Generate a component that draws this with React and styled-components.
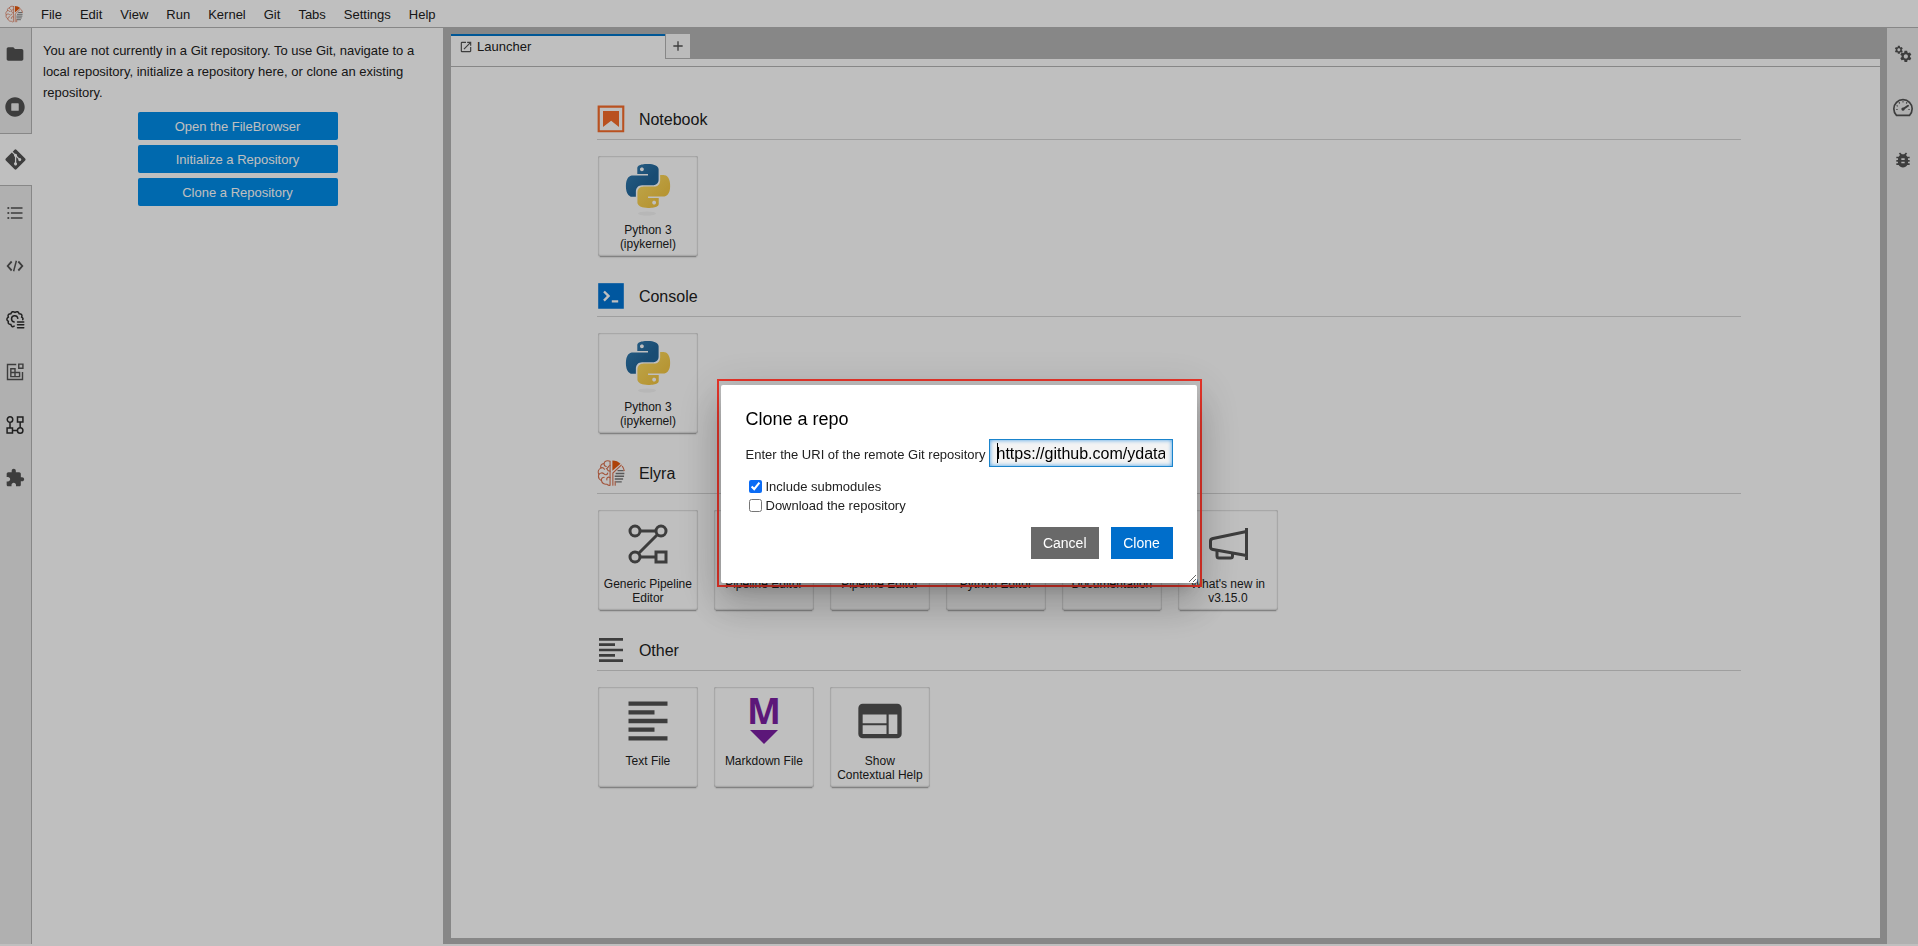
import React, { useEffect, useRef } from "react";
import styled, { createGlobalStyle } from "styled-components";
import { FaGitAlt } from "react-icons/fa";

const GlobalStyle = createGlobalStyle`
  * { box-sizing: border-box; }
  body { margin: 0; background: #fff; }
  body, button, input { font-family: "Liberation Sans", Arial, sans-serif; }
`;

const ink = "#212121";
const iconInk = "#525252";
const line = "#b5b5b5";

const Page = styled.div`
  display: flex;
  flex-direction: column;
  min-height: 100vh;
  padding-bottom: 2px;
  font-size: 13px;
  color: ${ink};
`;

const MenuBar = styled.nav`
  display: flex;
  align-items: center;
  height: 28px;
  padding-left: 5px;
  border-bottom: 1px solid ${line};
`;

const MenuItems = styled.div`
  display: flex;
  padding: 2px 0 0 9px;
`;

const MenuItem = styled.button`
  padding: 0 9px;
  border: 0;
  background: none;
  font-size: 13px;
  line-height: 20px;
  color: ${ink};
`;

const Body = styled.div`
  display: flex;
  flex: 1;
`;

const SideBar = styled.aside`
  display: flex;
  flex-direction: column;
  flex: none;
  width: ${(p) => (p.$right ? "31px" : "32px")};
  background: #ebebeb;
`;

const SideTab = styled.button`
  display: flex;
  align-items: center;
  justify-content: center;
  height: 53px;
  padding: 0;
  border: 0 solid ${line};
  border-right-width: ${(p) => (p.$plain || p.$current ? 0 : "1px")};
  border-top-width: ${(p) => (p.$current ? "1px" : 0)};
  border-bottom-width: ${(p) => (p.$current ? "1px" : 0)};
  padding-right: ${(p) => (p.$plain ? 0 : p.$current ? "2px" : "1px")};
  background: ${(p) => (p.$current ? "#fff" : "transparent")};
  color: ${iconInk};

  &:first-child {
    height: 52px;
  }
`;

const SideFill = styled.div`
  flex: 1;
  border-right: 1px solid ${line};
`;

const GitPanel = styled.section`
  flex: none;
  width: 411px;
  padding: 12px 11px;
  background: #fff;
`;

const GitText = styled.p`
  margin: 0 0 9px;
  line-height: 21px;
`;

const GitActions = styled.div`
  display: flex;
  flex-direction: column;
  align-items: center;
  gap: 5px;
`;

const GitButton = styled.button`
  width: 200px;
  height: 28px;
  border: 0;
  border-radius: 2px;
  background: #008ce8;
  color: #fff;
  font-size: 13px;
`;

const Dock = styled.main`
  display: flex;
  flex-direction: column;
  flex: 1;
  padding: 6px 7px 6px 8px;
  background: #b5b5b5;
`;

const TabRow = styled.div`
  display: flex;
  align-items: flex-start;
  height: 25px;
`;

const Tab = styled.div`
  display: flex;
  align-items: center;
  gap: 4px;
  width: 214px;
  height: 25px;
  padding: 0 8px 2px;
  border-top: 2px solid #0074c8;
  background: #fff;
`;

const AddTab = styled.button`
  display: flex;
  align-items: center;
  justify-content: center;
  width: 25px;
  height: 25px;
  padding: 0;
  border: solid ${line};
  border-width: 0 0 1px 1px;
  background: #fafafa;
  color: ${iconInk};
`;

const Toolbar = styled.div`
  height: 8px;
  border-bottom: 1px solid ${line};
  background: #fff;
`;

const Launcher = styled.div`
  display: flex;
  flex-direction: column;
  flex: 1;
  gap: 26px;
  padding: 38px calc(10% - 4px) 38px calc(10% + 3px);
  background: #fff;
`;

const SectionHead = styled.div`
  display: flex;
  align-items: flex-start;
  gap: 14px;
  height: 35px;
  border-bottom: 1px solid #d5d5d5;
`;

const SectionTitle = styled.h2`
  margin: 0;
  font-size: 16px;
  font-weight: 400;
  line-height: 29px;
`;

const Cards = styled.div`
  display: flex;
  gap: 16px;
  padding: 16px 1px 0;
`;

const Card = styled.button`
  display: flex;
  flex-direction: column;
  align-items: center;
  width: 100px;
  height: 100px;
  padding: 8px 2px 0;
  border: 0;
  border-radius: 2px;
  background: #fff;
  box-shadow: 0 3px 1px -2px rgba(0, 0, 0, 0.2), 0 2px 2px -1px rgba(0, 0, 0, 0.2),
    inset 0 0 2px 0 rgba(0, 0, 0, 0.45);
  color: ${ink};
`;

const CardLabel = styled.span`
  margin-top: 7px;
  font-size: 12px;
  line-height: 14px;
  text-align: center;
  white-space: pre-line;
`;

const Overlay = styled.div`
  position: fixed;
  inset: 0;
  display: flex;
  align-items: center;
  justify-content: center;
  padding-top: 20px;
  background: rgba(0, 0, 0, 0.25);
`;

const Highlight = styled.div`
  border: 2px solid #e8352a;
  padding: 4px 3px 2px 2px;
`;

const Dialog = styled.form`
  display: flex;
  flex-direction: column;
  width: 476px;
  padding: 21px 24px 24px 25px;
  border-radius: 2px;
  background: #fff;
  box-shadow: 0 11px 15px -7px rgba(0, 0, 0, 0.2), 0 24px 38px 3px rgba(0, 0, 0, 0.14),
    0 9px 46px 8px rgba(0, 0, 0, 0.12);
  overflow: hidden;
  resize: both;
  font-size: 13px;
  color: ${ink};
`;

const DialogTitle = styled.h1`
  margin: 0 0 7px;
  font-size: 18px;
  font-weight: 400;
  line-height: 26px;
  color: #000;
`;

const UriRow = styled.div`
  display: flex;
  align-items: center;
  justify-content: space-between;
  margin-bottom: 10px;
  white-space: nowrap;
`;

const UriLabel = styled.label`
  padding-top: 3px;
  line-height: 20px;
`;

const UriField = styled.div`
  position: relative;

  &::after {
    content: "";
    position: absolute;
    top: 4px;
    left: 8px;
    width: 1px;
    height: 20px;
    background: #000;
  }
`;

const UriInput = styled.input`
  display: block;
  width: 184px;
  height: 28px;
  padding: 1px 7px 0;
  border: 1px solid #1a84cc;
  border-radius: 0;
  outline: 0;
  background: #f3f3f3;
  box-shadow: inset 0 0 4px #3c9be6;
  caret-color: transparent;
  font-size: 16px;
  color: #000;
`;

const CheckRow = styled.label`
  display: flex;
  align-items: center;
  gap: 4px;
  height: 19px;
  padding-left: 3px;
`;

const Check = styled.input`
  width: 13px;
  height: 13px;
  margin: 0;
  accent-color: #0b6cf5;
`;

const DialogActions = styled.div`
  display: flex;
  justify-content: flex-end;
  gap: 12px;
  margin-top: 12px;
`;

const DialogButton = styled.button`
  min-width: 62px;
  height: 32px;
  padding: 0 12px;
  border: 0;
  background: ${(p) => (p.$primary ? "#006ecb" : "#696969")};
  color: #fff;
  font-size: 14px;
`;

const Svg = ({ size = 20, box = "0 0 24 24", children }) => (
  <svg width={size} height={size} viewBox={box} fill="currentColor" aria-hidden="true">
    {children}
  </svg>
);

const gearPath =
  "M19.14 12.94c.04-.3.06-.61.06-.94 0-.32-.02-.64-.07-.94l2.03-1.58c.18-.14.23-.41.12-.61l-1.92-3.32c-.12-.22-.37-.29-.59-.22l-2.39.96c-.5-.38-1.03-.7-1.62-.94l-.36-2.54c-.04-.24-.24-.41-.48-.41h-3.84c-.24 0-.43.17-.47.41l-.36 2.54c-.59.24-1.13.57-1.62.94l-2.39-.96c-.22-.08-.47 0-.59.22L2.74 8.87c-.12.21-.08.47.12.61l2.03 1.58c-.05.3-.09.63-.09.94s.02.64.07.94l-2.03 1.58c-.18.14-.23.41-.12.61l1.92 3.32c.12.22.37.29.59.22l2.39-.96c.5.38 1.03.7 1.62.94l.36 2.54c.05.24.24.41.48.41h3.84c.24 0 .44-.17.47-.41l.36-2.54c.59-.24 1.13-.56 1.62-.94l2.39.96c.22.08.47 0 .59-.22l1.92-3.32c.12-.22.07-.47-.12-.61l-2.01-1.58zM12 15.6c-1.98 0-3.6-1.62-3.6-3.6s1.62-3.6 3.6-3.6 3.6 1.62 3.6 3.6-1.62 3.6-3.6 3.6z";

const textLines = "M15 15H3v2h12v-2zm0-8H3v2h12V7zM3 13h18v-2H3v2zm0 8h18v-2H3v2zM3 3v2h18V3H3z";

const ElyraLogo = ({ size }) => (
  <Svg size={size} box="0 0 30 30">
    <g fill="none" stroke="#d9714f" strokeWidth="1.2" strokeLinecap="round">
      <path d="M14 2.500c-3-1.500-6 0-6.500 2.300C4.500 5 3.500 7.500 4.200 9.500 1.500 11 .700 14 2 16.500c-1 3 .500 5.500 2.700 6.500.500 3 3.300 4.500 5.800 4 1.200 1.300 2.500 1.500 3.500 1V2.500z" />
      <path d="M7.500 4.800c0 2 1 3 2.500 3.200M4.200 9.500c1.500-.5 3 0 3.800 1.500M14 7c-2 0-2 3-4 3.500M2 16.500c1.500-2 4-2 5.500-.5s3.500 1 4-1M4.700 23c-.2-2 1-3.500 3-3.500M14 13c-1 0-2.500 0-3-2M14 20c-2-1.500-4 0-3.500 2.500" />
      <path d="M17 28V15l9-8.500M19.500 28v-4" />
    </g>
    <path d="M16.500 1.500c3.500 0 6.500 1.200 8.700 3.700L16.500 12.500z" fill="#e8590c" />
    <path
      d="M22 12.500h6.500M20 15.500h9.300M19 18.500h10M19 21.500h9M20 24.500h6.500"
      fill="none"
      stroke="#777"
      strokeWidth="1.500"
    />
    <path d="M27 7.500c1.200 1.700 2 3.500 2.200 5.500" fill="none" stroke="#d9714f" strokeWidth="1.300" />
  </Svg>
);

const PythonIcon = () => (
  <Svg size={52} box="0 0 52 52">
    <defs>
      <linearGradient id="pyBlue" x1="0" y1="0" x2="1" y2="1">
        <stop offset="0" stopColor="#3680b4" />
        <stop offset="0.600" stopColor="#22669a" />
      </linearGradient>
      <linearGradient id="pyYellow" x1="0" y1="0" x2="1" y2="1">
        <stop offset="0" stopColor="#ffdf66" />
        <stop offset="1" stopColor="#efbe38" />
      </linearGradient>
    </defs>
    <ellipse cx="25" cy="49.500" rx="9" ry="2" fill="#f4f4f4" />
    <g transform="translate(4 0) scale(1.830)">
      <path
        fill="url(#pyBlue)"
        d="M14.25.18l.9.2.73.26.59.3.45.32.34.34.25.34.16.33.1.3.04.26.02.2-.01.13V8.5l-.05.63-.13.55-.21.46-.26.38-.3.31-.33.25-.35.19-.35.14-.33.1-.3.07-.26.04-.21.02H8.77l-.69.05-.59.14-.5.22-.41.27-.33.32-.27.35-.2.36-.15.37-.1.35-.07.32-.04.27-.02.21v3.06H3.17l-.21-.03-.28-.07-.32-.12-.35-.18-.36-.26-.36-.36-.35-.46-.32-.59-.28-.73-.21-.88-.14-1.05-.05-1.23.06-1.22.16-1.04.24-.87.32-.71.36-.57.4-.44.42-.33.42-.24.4-.16.36-.1.32-.05.24-.01h.16l.06.01h8.16v-.83H6.18l-.01-2.75-.02-.37.05-.34.11-.31.17-.28.25-.26.31-.23.38-.2.44-.18.51-.15.58-.12.64-.1.71-.06.77-.04.84-.02 1.27.05zm-6.3 1.98l-.23.33-.08.41.08.41.23.34.33.22.41.09.41-.09.33-.22.23-.34.08-.41-.08-.41-.23-.33-.33-.22-.41-.09-.41.09z"
      />
      <path
        fill="url(#pyYellow)"
        d="M21.1 6.11l.28.06.32.12.35.18.36.27.36.35.35.47.32.59.28.73.21.88.14 1.04.05 1.23-.06 1.23-.16 1.04-.24.86-.32.71-.36.57-.4.45-.42.33-.42.24-.4.16-.36.09-.32.05-.24.02-.16-.01h-8.22v.82h5.84l.01 2.76.02.36-.05.34-.11.31-.17.29-.25.25-.31.24-.38.2-.44.17-.51.15-.58.13-.64.09-.71.07-.77.04-.84.01-1.27-.04-1.07-.14-.9-.2-.73-.25-.59-.3-.45-.33-.34-.34-.25-.34-.16-.33-.1-.3-.04-.25-.02-.2.01-.13v-5.34l.05-.64.13-.54.21-.46.26-.38.3-.32.33-.24.35-.2.35-.14.33-.1.3-.06.26-.04.21-.02.13-.01h5.84l.69-.05.59-.14.5-.21.41-.28.33-.32.27-.35.2-.36.15-.36.1-.35.07-.32.04-.28.02-.21V6.07h2.09l.14.01zm-6.47 14.25l-.23.33-.08.41.08.41.23.33.33.23.41.08.41-.08.33-.23.23-.33.08-.41-.08-.41-.23-.33-.33-.23-.41-.08-.41.08z"
      />
    </g>
  </Svg>
);

const PipelineIcon = () => (
  <Svg size={52} box="0 0 52 52">
    <g fill="none" stroke={iconInk} strokeWidth="3">
      <circle cx="13" cy="13" r="5" />
      <circle cx="39" cy="13" r="5" />
      <circle cx="13" cy="39" r="5" />
      <path d="M34 34h10v10H34zM18 13h16M18 39h16M35.500 16.500l-19 19" />
    </g>
  </Svg>
);

const MegaphoneIcon = () => (
  <Svg size={52} box="0 0 52 52">
    <g fill="none" stroke={iconInk} strokeWidth="3">
      <path d="M44.500 10v32M44.500 13.500L11 20.500q-2.500.500-2.500 2.500v6q0 2 2.500 2.500l33.500 6" />
      <path d="M15 32.500v5.500q0 2 2 2h11.500q2 0 2-2v-2.500" />
    </g>
  </Svg>
);

const TextIcon = () => (
  <Svg size={52}>
    <path fill={iconInk} d={textLines} />
  </Svg>
);

const MarkdownLetter = styled.text`
  font-family: "Open Sans", sans-serif;
  font-size: 36px;
  font-weight: 700;
  text-anchor: middle;
  fill: #7b1fa2;
`;

const MarkdownIcon = () => (
  <Svg size={52} box="0 0 52 52">
    <MarkdownLetter x="26" y="29">
      M
    </MarkdownLetter>
    <path d="M12 35h28L26 49z" fill="#7b1fa2" />
  </Svg>
);

const HelpIcon = () => (
  <Svg size={52}>
    <path
      fill={iconInk}
      d="M20 4H4c-1.1 0-1.99.9-1.99 2L2 18c0 1.1.9 2 2 2h16c1.1 0 2-.9 2-2V6c0-1.1-.9-2-2-2zm-5 14H4v-4h11v4zm0-5H4V9h11v4zm5 5h-4V9h4v9z"
    />
  </Svg>
);

const leftTabs = [
  {
    name: "File Browser",
    icon: (
      <Svg>
        <path d="M10 4H4c-1.1 0-1.99.9-1.99 2L2 18c0 1.1.9 2 2 2h16c1.1 0 2-.9 2-2V8c0-1.1-.9-2-2-2h-8l-2-2z" />
      </Svg>
    ),
  },
  {
    name: "Running Terminals and Kernels",
    icon: (
      <Svg box="0 0 512 512">
        <path d="M256 8C119 8 8 119 8 256s111 248 248 248 248-111 248-248S393 8 256 8zm96 328c0 8.800-7.200 16-16 16H176c-8.800 0-16-7.200-16-16V176c0-8.800 7.200-16 16-16h160c8.800 0 16 7.200 16 16v160z" />
      </Svg>
    ),
  },
  { name: "Git", current: true, icon: <FaGitAlt size={23} /> },
  {
    name: "Table of Contents",
    icon: (
      <Svg>
        <path d="M7 5h14v2H7zM7 11h14v2H7zM7 17h14v2H7z" />
        <circle cx="4" cy="6" r="1.300" />
        <circle cx="4" cy="12" r="1.300" />
        <circle cx="4" cy="18" r="1.300" />
      </Svg>
    ),
  },
  {
    name: "Code Snippets",
    icon: (
      <Svg>
        <path d="M8.800 16.600L4.600 12l4.200-4.600L7.200 5.800 1.800 12l5.400 6.200zM15.200 16.600l4.200-4.600-4.200-4.600 1.600-1.600 5.400 6.200-5.400 6.200zM12.800 5.500l1.700.4-3.300 12.600-1.700-.4z" />
      </Svg>
    ),
  },
  {
    name: "Runtimes",
    icon: (
      <Svg>
        <g fill="none" stroke="#2b2b2b" strokeWidth="1.800" strokeLinecap="round">
          <path d="M11 20.500q-3 2-4-2q-4 0-3-3.700q-3.500-2.800 0-5q-1.500-4 3-4q1.500-4 5-1.800q3.500-2.200 5 1.800q4.500 0 3 4q2.300 1.200 1.300 3" />
          <path d="M11 15.500a3.800 3.800 0 1 1 4.400-4.300" />
          <path d="M15 15.500h7.500M15 19h7.500M15 22.500h7.500" />
        </g>
      </Svg>
    ),
  },
  {
    name: "Component Catalogs",
    icon: (
      <Svg>
        <g fill="none" stroke={iconInk} strokeWidth="1.700">
          <path d="M13.500 3H3v18h18V12M16.500 2.500h5v5h-5zM7 8h5v9.500H7zM7 12.500h10.500v5H7zM12 17.500v-5M12 8v4.500" />
        </g>
      </Svg>
    ),
  },
  {
    name: "Pipeline Components",
    icon: (
      <Svg>
        <g fill="none" stroke="#2b2b2b" strokeWidth="1.800">
          <circle cx="6" cy="5.500" r="3.300" />
          <path d="M15 2.500h6.500v6H15zM2.500 15.500H9v6H2.500zM6 9v6.500M18.200 8.500V15M9 18.500h6" />
          <circle cx="18.200" cy="18.500" r="3.300" />
        </g>
      </Svg>
    ),
  },
  {
    name: "Extension Manager",
    icon: (
      <Svg>
        <path d="M20.500 11H19V7c0-1.100-.9-2-2-2h-4V3.500C13 2.120 11.880 1 10.500 1S8 2.120 8 3.500V5H4c-1.100 0-1.990.9-1.990 2v3.800H3.500c1.490 0 2.700 1.210 2.700 2.700s-1.210 2.700-2.700 2.700H2V20c0 1.100.9 2 2 2h3.800v-1.500c0-1.490 1.210-2.700 2.700-2.700 1.490 0 2.700 1.210 2.700 2.700V22H17c1.100 0 2-.9 2-2v-4h1.500c1.380 0 2.500-1.120 2.500-2.500S21.880 11 20.500 11z" />
      </Svg>
    ),
  },
];

const rightTabs = [
  {
    name: "Property Inspector",
    icon: (
      <Svg>
        <path transform="translate(1 1) scale(.5)" d={gearPath} />
        <path transform="translate(7 6.500) scale(.7)" d={gearPath} />
      </Svg>
    ),
  },
  {
    name: "Resource Usage",
    icon: (
      <Svg>
        <g fill="none" stroke={iconInk} strokeWidth="2" strokeLinecap="round">
          <path d="M4.200 22a11 11 0 1 1 15.600 0z" strokeLinejoin="round" />
          <path d="M12 14.500l6-4" strokeWidth="2.400" />
          <path
            d="M12 5.500v.5M7.500 6.800l.3.500M16.500 6.800l-.3.500M4.800 10.500l.5.200M4.500 15h.5M19.500 15h-.5"
            strokeWidth="1.400"
          />
        </g>
        <circle cx="12" cy="14.500" r="2" />
      </Svg>
    ),
  },
  {
    name: "Debugger",
    icon: (
      <Svg>
        <path d="M20 8h-2.810c-.45-.78-1.070-1.450-1.820-1.960L17 4.410 15.590 3l-2.170 2.170C12.960 5.060 12.490 5 12 5c-.49 0-.96.06-1.410.17L8.410 3 7 4.410l1.620 1.630C7.880 6.550 7.260 7.220 6.810 8H4v2h2.090c-.05.33-.09.66-.09 1v1H4v2h2v1c0 .34.04.67.09 1H4v2h2.810c1.040 1.790 2.970 3 5.190 3s4.150-1.210 5.190-3H20v-2h-2.090c.05-.33.09-.66.09-1v-1h2v-2h-2v-1c0-.34-.04-.67-.09-1H20V8zm-6 8h-4v-2h4v2zm0-4h-4v-2h4v2z" />
      </Svg>
    ),
  },
];

const sections = [
  {
    title: "Notebook",
    icon: (
      <Svg size={28} box="1.375 1.375 19.250 19.250">
        <g fill="#f76d2b">
          <path d="M18.700 3.300v15.400H3.300V3.300h15.400m1.500-1.500H1.800v18.300h18.300l.1-18.300z" />
          <path d="M16.500 16.500l-5.400-4.300-5.600 4.300v-11h11z" />
        </g>
      </Svg>
    ),
    cards: [{ label: "Python 3\n(ipykernel)", Icon: PythonIcon }],
  },
  {
    title: "Console",
    icon: (
      <Svg size={28} box="12.500 12.500 175 175">
        <path fill="#0074d5" d="M20 19.800h160v159.900H20z" />
        <path
          fill="#fff"
          d="M105 127.300h40v12.800h-40v-12.800zM51.100 77L74 99.900l-23.300 23.300 10.500 10.500 23.300-23.300L95 99.900 84.500 89.400 61.600 66.500 51.100 77z"
        />
      </Svg>
    ),
    cards: [{ label: "Python 3\n(ipykernel)", Icon: PythonIcon }],
  },
  {
    title: "Elyra",
    icon: <ElyraLogo size={28} />,
    cards: [
      { label: "Generic Pipeline\nEditor", Icon: PipelineIcon },
      { label: "Pipeline Editor", Icon: PipelineIcon },
      { label: "Pipeline Editor", Icon: PipelineIcon },
      { label: "Python Editor", Icon: PythonIcon },
      { label: "Documentation", Icon: TextIcon },
      { label: "What's new in\nv3.15.0", Icon: MegaphoneIcon },
    ],
  },
  {
    title: "Other",
    icon: (
      <Svg size={28} box="1.500 1.500 21 21">
        <path fill={iconInk} d={textLines} />
      </Svg>
    ),
    cards: [
      { label: "Text File", Icon: TextIcon },
      { label: "Markdown File", Icon: MarkdownIcon },
      { label: "Show\nContextual Help", Icon: HelpIcon },
    ],
  },
];

const menus = ["File", "Edit", "View", "Run", "Kernel", "Git", "Tabs", "Settings", "Help"];

function CloneDialog() {
  const uri = useRef(null);
  useEffect(() => {
    uri.current.setSelectionRange(0, 0);
    uri.current.focus({ preventScroll: true });
    uri.current.scrollLeft = 0;
  }, []);
  return (
    <Overlay>
      <Highlight>
        <Dialog role="dialog" aria-labelledby="clone-title" onSubmit={(e) => e.preventDefault()}>
          <DialogTitle id="clone-title">Clone a repo</DialogTitle>
          <UriRow>
            <UriLabel htmlFor="uri">Enter the URI of the remote Git repository</UriLabel>
            <UriField>
              <UriInput id="uri" ref={uri} defaultValue="https://github.com/ydata" />
            </UriField>
          </UriRow>
          <CheckRow>
            <Check type="checkbox" defaultChecked />
            Include submodules
          </CheckRow>
          <CheckRow>
            <Check type="checkbox" />
            Download the repository
          </CheckRow>
          <DialogActions>
            <DialogButton type="button">Cancel</DialogButton>
            <DialogButton type="submit" $primary>
              Clone
            </DialogButton>
          </DialogActions>
        </Dialog>
      </Highlight>
    </Overlay>
  );
}

export default function App() {
  return (
    <>
      <GlobalStyle />
      <Page>
        <MenuBar>
          <ElyraLogo size={18} />
          <MenuItems>
            {menus.map((m) => (
              <MenuItem key={m}>{m}</MenuItem>
            ))}
          </MenuItems>
        </MenuBar>
        <Body>
          <SideBar>
            {leftTabs.map((t) => (
              <SideTab key={t.name} $current={t.current} aria-label={t.name}>
                {t.icon}
              </SideTab>
            ))}
            <SideFill />
          </SideBar>
          <GitPanel>
            <GitText>
              You are not currently in a Git repository. To use Git, navigate to a local repository,
              initialize a repository here, or clone an existing repository.
            </GitText>
            <GitActions>
              <GitButton>Open the FileBrowser</GitButton>
              <GitButton>Initialize a Repository</GitButton>
              <GitButton>Clone a Repository</GitButton>
            </GitActions>
          </GitPanel>
          <Dock>
            <TabRow>
              <Tab>
                <Svg size={14}>
                  <path
                    fill={iconInk}
                    d="M19 19H5V5h7V3H5a2 2 0 00-2 2v14a2 2 0 002 2h14c1.100 0 2-.9 2-2v-7h-2v7zM14 3v2h3.590l-9.830 9.830 1.410 1.410L19 6.410V10h2V3h-7z"
                  />
                </Svg>
                Launcher
              </Tab>
              <AddTab aria-label="New Launcher">
                <Svg size={16}>
                  <path d="M19 13h-6v6h-2v-6H5v-2h6V5h2v6h6v2z" />
                </Svg>
              </AddTab>
            </TabRow>
            <Toolbar />
            <Launcher>
              {sections.map((s) => (
                <section key={s.title}>
                  <SectionHead>
                    {s.icon}
                    <SectionTitle>{s.title}</SectionTitle>
                  </SectionHead>
                  <Cards>
                    {s.cards.map(({ label, Icon }, i) => (
                      <Card key={i}>
                        <Icon />
                        <CardLabel>{label}</CardLabel>
                      </Card>
                    ))}
                  </Cards>
                </section>
              ))}
            </Launcher>
          </Dock>
          <SideBar $right>
            {rightTabs.map((t) => (
              <SideTab key={t.name} $plain aria-label={t.name}>
                {t.icon}
              </SideTab>
            ))}
          </SideBar>
        </Body>
      </Page>
      <CloneDialog />
    </>
  );
}
